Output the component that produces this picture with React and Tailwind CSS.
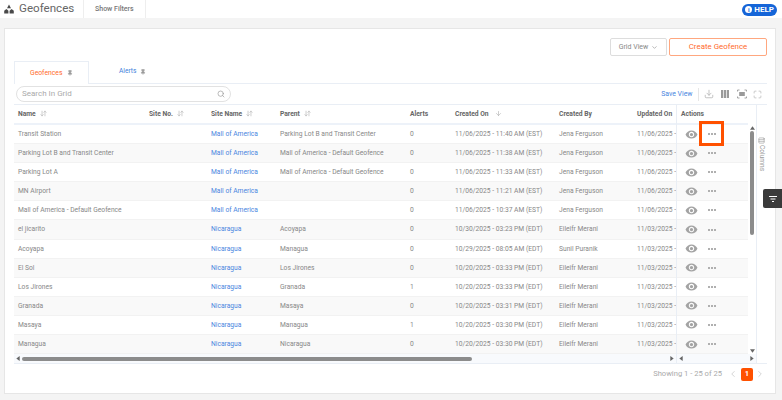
import { ArrowDown, ArrowDownUp, ChevronDown, ChevronLeft, ChevronRight, Columns3, Download, Maximize, Pin, Search } from "lucide-react";

const columns = [
  { label: "Name", width: "w-[131px]", sort: "both" },
  { label: "Site No.", width: "w-[62px]", sort: "both" },
  { label: "Site Name", width: "w-[69px]", sort: "both" },
  { label: "Parent", width: "w-[130px]", sort: "both" },
  { label: "Alerts", width: "w-[45px]" },
  { label: "Created On", width: "w-[104px]", sort: "down" },
  { label: "Created By", width: "w-[78px]" },
  { label: "Updated On", width: "w-[43px]" },
];

const rows = [
  ["Transit Station", "Mall of America", "Parking Lot B and Transit Center", "0", "11/06/2025 - 11:40 AM (EST)", "Jena Ferguson", "11/06/2025 -"],
  ["Parking Lot B and Transit Center", "Mall of America", "Mall of America - Default Geofence", "0", "11/06/2025 - 11:38 AM (EST)", "Jena Ferguson", "11/06/2025 -"],
  ["Parking Lot A", "Mall of America", "Mall of America - Default Geofence", "0", "11/06/2025 - 11:33 AM (EST)", "Jena Ferguson", "11/06/2025 -"],
  ["MN Airport", "Mall of America", "", "0", "11/06/2025 - 11:21 AM (EST)", "Jena Ferguson", "11/06/2025 -"],
  ["Mall of America - Default Geofence", "Mall of America", "", "0", "11/06/2025 - 10:37 AM (EST)", "Jena Ferguson", "11/06/2025 -"],
  ["el jicarito", "Nicaragua", "Acoyapa", "0", "10/30/2025 - 03:23 PM (EDT)", "Eileifr Merani", "11/03/2025 -"],
  ["Acoyapa", "Nicaragua", "Managua", "0", "10/29/2025 - 08:05 AM (EDT)", "Sunil Puranik", "11/03/2025 -"],
  ["El Sol", "Nicaragua", "Los Jirones", "0", "10/20/2025 - 03:33 PM (EDT)", "Eileifr Merani", "11/03/2025 -"],
  ["Los Jirones", "Nicaragua", "Granada", "1", "10/20/2025 - 03:33 PM (EDT)", "Eileifr Merani", "11/03/2025 -"],
  ["Granada", "Nicaragua", "Masaya", "0", "10/20/2025 - 03:31 PM (EDT)", "Eileifr Merani", "11/03/2025 -"],
  ["Masaya", "Nicaragua", "Managua", "1", "10/20/2025 - 03:30 PM (EDT)", "Eileifr Merani", "11/03/2025 -"],
  ["Managua", "Nicaragua", "Nicaragua", "0", "10/20/2025 - 03:30 PM (EDT)", "Eileifr Merani", "11/03/2025 -"],
];

function EyeIcon() {
  return (
    <svg className="w-[13px] h-[13px] text-[#a3a3a3]" viewBox="0 0 24 24" fill="currentColor">
      <path d="M12 4.5C7 4.5 2.73 7.61 1 12c1.73 4.39 6 7.5 11 7.5s9.27-3.11 11-7.5c-1.73-4.39-6-7.5-11-7.5zM12 17c-2.76 0-5-2.24-5-5s2.24-5 5-5 5 2.24 5 5-2.24 5-5 5zm0-8c-1.66 0-3 1.34-3 3s1.34 3 3 3 3-1.34 3-3-1.34-3-3-3z" />
    </svg>
  );
}

function Dots() {
  return (
    <div className="flex gap-px">
      <span className="w-[2px] h-[2px] bg-[#b0b0b0]" />
      <span className="w-[2px] h-[2px] bg-[#b0b0b0]" />
      <span className="w-[2px] h-[2px] bg-[#b0b0b0]" />
    </div>
  );
}

function Arrow({ dir }) {
  const path = {
    up: "M0 4 L3 0 L6 4 Z",
    down: "M0 0 L6 0 L3 4 Z",
    left: "M4 0 L4 6 L0 3 Z",
    right: "M0 0 L0 6 L4 3 Z",
  }[dir];
  const box = dir === "up" || dir === "down" ? "0 0 6 4" : "0 0 4 6";
  const size = dir === "up" || dir === "down" ? "w-[5px] h-[4px]" : "w-[4px] h-[5px]";
  return (
    <svg className={`${size} text-[#666]`} viewBox={box} fill="currentColor">
      <path d={path} />
    </svg>
  );
}

function GroupLogo() {
  return (
    <svg className="w-[10px] h-[10px] text-[#4a4a4a]" viewBox="0 0 10 10" fill="currentColor">
      <path d="M5 0.5 L7 4.2 L3 4.2 Z" />
      <path d="M2.4 5 L4.4 6.8 L4.4 9.4 L0.2 9.4 L0.2 6.8 Z" />
      <path d="M7.6 5 L9.8 6.8 L9.8 9.4 L5.6 9.4 L5.6 6.8 Z" />
    </svg>
  );
}

function ColumnsIcon() {
  return (
    <svg className="w-[10px] h-[10px] text-[#9a9a9a]" viewBox="0 0 10 10" fill="currentColor">
      <path d="M1 1h2.2v8H1zM3.9 1h2.2v8H3.9zM6.8 1H9v8H6.8z" />
    </svg>
  );
}

function FocusIcon() {
  return (
    <svg className="w-[10px] h-[10px] text-[#9a9a9a]" viewBox="0 0 10 10" fill="none" stroke="currentColor" strokeWidth="0.9">
      <path d="M0.5 2.5V1h2M7.5 1h2v1.5M9.5 7.5V9h-2M2.5 9h-2V7.5" />
      <rect x="2.2" y="3" width="5.6" height="4" fill="currentColor" stroke="none" />
    </svg>
  );
}

function GridRow({ row, index }) {
  const stripe = index % 2 === 0 ? "bg-white" : "bg-[#f9f9f9]";
  const cell = "shrink-0 pl-1 whitespace-nowrap";
  return (
    <div className={`flex items-center h-[19.1px] border-b border-[#f2f2f2] text-[6.7px] text-[#888] ${stripe}`}>
      <div className={`${cell} w-[131px]`}>{row[0]}</div>
      <div className={`${cell} w-[62px]`} />
      <div className={`${cell} w-[69px] text-[#4a86e0]`}>{row[1]}</div>
      <div className={`${cell} w-[130px]`}>{row[2]}</div>
      <div className={`${cell} w-[45px]`}>{row[3]}</div>
      <div className={`${cell} w-[104px]`}>{row[4]}</div>
      <div className={`${cell} w-[78px]`}>{row[5]}</div>
      <div className={`${cell} w-[43px]`}>{row[6]}</div>
    </div>
  );
}

function ActionRow({ index }) {
  const stripe = index % 2 === 0 ? "bg-white" : "bg-[#f9f9f9]";
  return (
    <div className={`relative flex items-center h-[19.1px] border-b border-[#f2f2f2] pl-[8px] gap-[10px] ${stripe}`}>
      <EyeIcon />
      <Dots />
      {index === 0 && <div className="absolute z-10 left-[22px] top-[-4px] w-[25px] h-[25px] border-[3px] border-[#ff5100]" />}
    </div>
  );
}

export default function App() {
  return (
    <div className="relative w-[782px] h-[400px] overflow-hidden bg-[#f4f4f4] font-['Roboto',sans-serif]">
      {/* Top bar */}
      <header className="flex items-center h-[18px] bg-white pl-1 pr-[5px]">
        <GroupLogo />
        <h1 className="ml-[5px] w-[64px] text-[11.6px] leading-none text-[#666]">Geofences</h1>
        <div className="flex items-center h-[18px] px-[11px] border-x border-[#eeeeee] text-[7px] font-medium text-[#777]">
          Show Filters
        </div>
        <div className="ml-auto mt-px flex items-center gap-[2px] h-[12px] px-[3px] rounded-full bg-[#1565d8] text-[8px] font-bold text-white">
          <span className="flex items-center justify-center w-[7px] h-[7px] rounded-full bg-white text-[6px] leading-none text-[#1565d8]">i</span>
          HELP
        </div>
      </header>

      {/* Card */}
      <main className="mt-[10px] ml-1 w-[772px] h-[366px] px-[9px] pt-[9px] bg-white border border-[#e6e6e6]">
        <div className="flex justify-end gap-[2px] w-[753px]">
          <button className="flex items-center justify-center gap-[3px] w-[57px] h-[18px] rounded-[2px] border border-[#dddddd] text-[7px] text-[#888]">
            Grid View
            <ChevronDown className="w-[7px] h-[7px]" />
          </button>
          <button className="w-[98px] h-[18px] rounded-[2px] border border-[#ffa77f] text-[7.9px] text-[#ff6a2b]">
            Create Geofence
          </button>
        </div>

        {/* Tabs */}
        <div className="flex h-[23px] w-[753px] mt-[5px] border-b border-[#e9eef5]">
          <div className="flex items-center gap-[5px] w-[75px] h-[23px] pl-[15px] bg-white border border-b-0 border-[#e9eef5] text-[6.8px] text-[#ff6a2b]">
            Geofences
            <Pin className="w-[6px] h-[6px] text-[#999]" fill="currentColor" />
          </div>
          <div className="flex items-center gap-[4px] h-[22px] pl-[30px] text-[6.6px] text-[#3f7fdc]">
            Alerts
            <Pin className="w-[6px] h-[6px] text-[#999]" fill="currentColor" />
          </div>
        </div>

        {/* Grid toolbar */}
        <div className="flex items-center h-[20px] w-[753px] px-[2px]">
          <div className="flex items-center w-[215px] h-[16px] px-[5px] rounded-full border border-[#e2e2e2] text-[8px] text-[#aaa]">
            Search In Grid
            <Search className="ml-auto w-[8px] h-[8px] text-[#999]" />
          </div>
          <span className="ml-auto text-[6.9px] text-[#4a86e0]">Save View</span>
          <span className="ml-[5px] w-px h-[13px] bg-[#e6e6e6]" />
          <div className="flex items-center gap-[6.5px] ml-[5px] mr-[3px] text-[#b8b8b8]">
            <Download className="w-[10px] h-[10px]" />
            <ColumnsIcon />
            <FocusIcon />
            <Maximize className="w-[9px] h-[9px]" />
          </div>
        </div>

        {/* Grid */}
        <div className="flex w-[753px] h-[260px] border-y border-[#e9eef5]">
          <div className="w-[662px] overflow-hidden">
            <div className="flex items-center h-[20px] border-b-2 border-[#edf2f9] text-[6.7px] font-bold text-[#666]">
              {columns.map((col) => (
                <div key={col.label} className={`flex items-center gap-[4px] shrink-0 pl-1 whitespace-nowrap ${col.width}`}>
                  {col.label}
                  {col.sort === "both" && <ArrowDownUp className="w-[7px] h-[7px] text-[#aaa]" />}
                  {col.sort === "down" && <ArrowDown className="ml-[2px] w-[7px] h-[7px] text-[#aaa]" />}
                </div>
              ))}
            </div>
            {rows.map((row, i) => (
              <GridRow key={row[0]} row={row} index={i} />
            ))}
            <div className="flex items-center h-[9px] px-[2px] bg-[#f8fafd]">
              <Arrow dir="left" />
              <div className="ml-[2px] w-[450px] h-[4px] rounded-full bg-[#8c8c8c]" />
              <div className="ml-auto">
                <Arrow dir="right" />
              </div>
            </div>
          </div>

          <div className="w-[72px] border-l border-[#e9eef5]">
            <div className="flex items-center h-[20px] pl-1 border-b-2 border-[#edf2f9] text-[6.7px] font-bold text-[#666]">
              Actions
            </div>
            {rows.map((row, i) => (
              <ActionRow key={row[0]} index={i} />
            ))}
            <div className="flex items-center h-[9px] px-[2px] bg-[#f8fafd]">
              <Arrow dir="left" />
            </div>
          </div>

          <div className="w-[8px] pt-[20px]">
            <div className="flex flex-col items-center h-[229px] pt-px pb-[1px]">
              <Arrow dir="up" />
              <div className="mt-[1px] w-[4px] h-[104px] rounded-full bg-[#8c8c8c]" />
              <div className="mt-auto">
                <Arrow dir="down" />
              </div>
            </div>
            <div className="flex items-center justify-center h-[9px] bg-[#f8fafd]">
              <Arrow dir="right" />
            </div>
          </div>

          <div className="flex flex-col items-center w-[11px] pt-[32px] pr-px border-l border-[#e9eef5] text-[#999]">
            <Columns3 className="w-[7px] h-[7px] rotate-90" />
            <span className="mt-[1px] [writing-mode:vertical-rl] text-[6.6px]">Columns</span>
          </div>
        </div>

        {/* Pagination */}
        <div className="flex items-center justify-end h-[20px] w-[753px] pr-[2px] text-[7.6px] text-[#aaa]">
          Showing 1 - 25 of 25
          <ChevronLeft className="ml-[6px] w-[10px] h-[10px] text-[#ccc]" />
          <span className="flex items-center justify-center ml-[3px] w-[12px] h-[13px] rounded-[2px] bg-[#ff5100] text-[7.6px] font-bold text-white">1</span>
          <ChevronRight className="ml-[2px] w-[10px] h-[10px] text-[#ccc]" />
        </div>
      </main>

      {/* Floating filter tab */}
      <div className="absolute right-0 top-[189px] flex items-center justify-center w-[19px] h-[19px] rounded-l-[2px] bg-[#3a3a3a] text-white">
        <svg className="w-[8px] h-[8px]" viewBox="0 0 8 8" fill="currentColor">
          <path d="M0 1h8v1H0zM1.5 3.5h5v1h-5zM3 6h2v1H3z" />
        </svg>
      </div>
    </div>
  );
}
